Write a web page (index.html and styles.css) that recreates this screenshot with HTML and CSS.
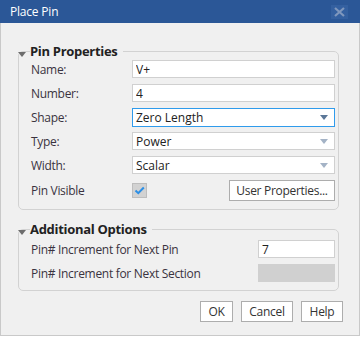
FILE: index.html
```html
<!doctype html>
<html>
  <head>
    <meta charset="UTF-8" />
    <title>Place Pin</title>
    <link rel="stylesheet" href="styles.css">
  </head>
  <body>
    <div class="dialog">
      <div class="titlebar">
        <span class="title">Place Pin</span>
        <span class="close">
          <svg width="11" height="10" viewBox="0 0 11 10">
            <path d="M1 1 L10 9 M10 1 L1 9" stroke="#7f97bd" stroke-width="2.2" fill="none" />
          </svg>
        </span>
      </div>
      <div class="content">
        <fieldset class="group">
          <legend>Pin Properties</legend>
          <div class="row">
            <label for="pinName">Name:</label>
            <input type="text" id="pinName" value="V+" />
          </div>
          <div class="row">
            <label for="pinNumber">Number:</label>
            <input type="text" id="pinNumber" value="4" />
          </div>
          <div class="row">
            <label>Shape:</label>
            <div class="select focused">Zero Length<span class="arrow"></span></div>
          </div>
          <div class="row">
            <label>Type:</label>
            <div class="select">Power<span class="arrow light"></span></div>
          </div>
          <div class="row">
            <label>Width:</label>
            <div class="select">Scalar<span class="arrow light"></span></div>
          </div>
          <div class="row check-row">
            <label>Pin Visible</label>
            <span class="checkbox">
              <svg width="11" height="9" viewBox="0 0 11 9">
                <path d="M1.5 4.5 L4.3 7.2 L9.8 1.5" stroke="#2b8fe6" stroke-width="2" fill="none" />
              </svg>
            </span>
            <button class="btn user-props">User Properties...</button>
          </div>
        </fieldset>

        <fieldset class="group extra">
          <legend>Additional Options</legend>
          <div class="row">
            <label for="incPin">Pin# Increment for Next Pin</label>
            <input type="text" id="incPin" class="short" value="7" />
          </div>
          <div class="row">
            <label>Pin# Increment for Next Section</label>
            <span class="disabled-box"></span>
          </div>
        </fieldset>

        <div class="actions">
          <button class="btn ok">OK</button>
          <button class="btn cancel">Cancel</button>
          <button class="btn help">Help</button>
        </div>
      </div>
    </div>
  </body>
</html>
```

FILE: styles.css
```css
body {
  margin: 0;
  background: #fff;
  font-family: "Open Sans", "Noto Sans", Arial, sans-serif;
  font-size: 12px;
  color: #3a3340;
}
.dialog {
  width: 360px;
  height: 336px;
  box-sizing: border-box;
  background: #f0f0f0;
  border: 1px solid #c9c9c9;
  border-top: none;
}
.titlebar {
  height: 23px;
  margin: 0 -1px;
  background: #2b5797;
  display: flex;
  align-items: center;
  justify-content: space-between;
  padding: 0 10px 0 10px;
}
.title {
  color: #fff;
  font-size: 12px;
  letter-spacing: -0.2px;
}
.close {
  display: flex;
  background: #3460a0;
  padding: 2px 3px;
  margin-right: 2px;
}
.content {
  padding: 19px 20px 0 17px;
}
.group {
  margin: 0;
  padding: 0 3px 8px 12px;
  border: 1px solid #d2d2d2;
  border-radius: 5px;
}
.group legend {
  position: relative;
  padding: 0 5px 0 0;
  margin-left: -1px;
  font-weight: bold;
  font-size: 13px;
  color: #222;
  letter-spacing: -0.3px;
  line-height: 18px;
}
.group legend::before {
  content: "";
  position: absolute;
  left: -12px;
  top: 10px;
  border-left: 4px solid transparent;
  border-right: 4px solid transparent;
  border-top: 5px solid #6d6d6d;
}
.row {
  display: flex;
  align-items: center;
  height: 18px;
  margin-top: 6px;
}
.row:first-of-type {
  margin-top: 0;
}
.row label {
  width: 101px;
  flex: none;
  letter-spacing: -0.3px;
}
input {
  flex: 1;
  min-width: 0;
  height: 18px;
  box-sizing: border-box;
  border: 1px solid #d0d0d0;
  background: #fff;
  padding: 0 3px;
  font-family: inherit;
  font-size: 12px;
  color: #222;
  outline: none;
}
.select {
  flex: 1;
  height: 18px;
  box-sizing: border-box;
  border: 1px solid #d0d0d0;
  background: #fff;
  padding: 0 3px;
  display: flex;
  align-items: center;
  justify-content: space-between;
  color: #222;
}
.select.focused {
  border-color: #2f9bec;
  height: 19px;
}
.arrow {
  border-left: 4px solid transparent;
  border-right: 4px solid transparent;
  border-top: 5px solid #5b7798;
  margin-right: 3px;
}
.arrow.light {
  border-top-color: #a4b3c6;
}
.check-row {
  height: 21px;
  margin-top: 6px;
}
.checkbox {
  width: 15px;
  height: 15px;
  box-sizing: border-box;
  background: #d2d2d2;
  border: 1px solid #bdbdbd;
  display: flex;
  align-items: center;
  justify-content: center;
}
.btn {
  height: 21px;
  box-sizing: border-box;
  border: 1px solid #adadad;
  background: #fff;
  font-family: inherit;
  font-size: 12px;
  color: #333;
  padding: 0 4px;
  letter-spacing: -0.3px;
  white-space: nowrap;
}
.user-props {
  margin-left: auto;
  width: 106px;
}
.extra {
  margin-top: 10px;
  padding-bottom: 8px;
}
.extra .row:first-of-type {
  margin-top: 2px;
}
.extra label {
  width: auto;
  flex: 1;
}
.extra input.short {
  flex: none;
  width: 77px;
}
.disabled-box {
  width: 77px;
  height: 18px;
  background: #d0d0d0;
}
.actions {
  display: flex;
  justify-content: flex-end;
  gap: 8px;
  margin-top: 10px;
  margin-right: -4px;
}
.ok {
  width: 33px;
}
.cancel {
  width: 52px;
}
.help {
  width: 42px;
}
```
